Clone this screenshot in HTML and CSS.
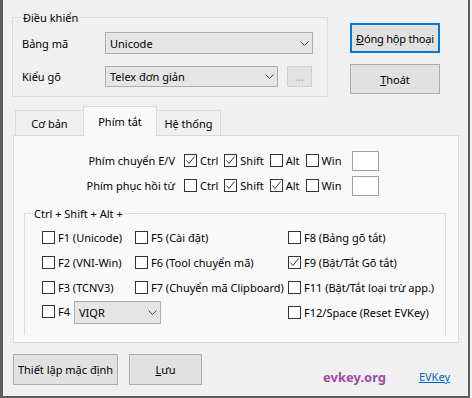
FILE: index.html
```html
<!DOCTYPE html>
<html lang="vi">
<head>
  <meta charset="UTF-8" />
  <title>EVKey | Phím tắt</title>
  <link rel="stylesheet" href="styles.css">
</head>
<body>
  <div class="window">
    <div class="top">
      <div class="group control">
        <span class="legend">Điều khiển</span>
        <div class="row">
          <span class="lbl">Bảng mã</span>
          <div class="combo combo-code">Unicode
            <svg class="chev" width="9" height="5" viewBox="0 0 9 5"><path d="M0.5 0.5 L4.5 4.5 L8.5 0.5" fill="none" stroke="#444"/></svg>
          </div>
        </div>
        <div class="row">
          <span class="lbl">Kiểu gõ</span>
          <div class="combo combo-type">Telex đơn giản
            <svg class="chev" width="9" height="5" viewBox="0 0 9 5"><path d="M0.5 0.5 L4.5 4.5 L8.5 0.5" fill="none" stroke="#444"/></svg>
          </div>
          <div class="dots">...</div>
        </div>
      </div>
      <div class="actions">
        <button class="btn btn-default"><u>Đ</u>óng hộp thoại</button>
        <button class="btn"><u>T</u>hoát</button>
      </div>
    </div>

    <div class="tabs">
      <div class="tab tab-first">Cơ bản</div>
      <div class="tab tab-active">Phím tắt</div>
      <div class="tab tab-last">Hệ thống</div>
    </div>

    <div class="panel">
      <div class="hk-row">
        <span class="hk-label">Phím chuyển E/V</span>
        <label class="check"><span class="box"><svg width="11" height="11" viewBox="0 0 11 11"><path d="M1.5 5.5 L4 8.5 L9.5 1.5" fill="none" stroke="#333"/></svg></span>Ctrl</label>
        <label class="check"><span class="box"><svg width="11" height="11" viewBox="0 0 11 11"><path d="M1.5 5.5 L4 8.5 L9.5 1.5" fill="none" stroke="#333"/></svg></span>Shift</label>
        <label class="check"><span class="box"></span>Alt</label>
        <label class="check"><span class="box"></span>Win</label>
        <span class="key"></span>
      </div>
      <div class="hk-row">
        <span class="hk-label">Phím phục hồi từ</span>
        <label class="check"><span class="box"></span>Ctrl</label>
        <label class="check"><span class="box"><svg width="11" height="11" viewBox="0 0 11 11"><path d="M1.5 5.5 L4 8.5 L9.5 1.5" fill="none" stroke="#333"/></svg></span>Shift</label>
        <label class="check"><span class="box"><svg width="11" height="11" viewBox="0 0 11 11"><path d="M1.5 5.5 L4 8.5 L9.5 1.5" fill="none" stroke="#333"/></svg></span>Alt</label>
        <label class="check"><span class="box"></span>Win</label>
        <span class="key"></span>
      </div>

      <div class="group hotkeys">
        <span class="legend">Ctrl + Shift + Alt +</span>
        <label class="check"><span class="box"></span>F1 (Unicode)</label>
        <label class="check"><span class="box"></span>F5 (Cài đặt)</label>
        <label class="check"><span class="box"></span>F8 (Bảng gõ tắt)</label>
        <label class="check"><span class="box"></span>F2 (VNI-Win)</label>
        <label class="check"><span class="box"></span>F6 (Tool chuyển mã)</label>
        <label class="check"><span class="box"><svg width="11" height="11" viewBox="0 0 11 11"><path d="M1.5 5.5 L4 8.5 L9.5 1.5" fill="none" stroke="#333"/></svg></span>F9 (Bật/Tắt Gõ tắt)</label>
        <label class="check"><span class="box"></span>F3 (TCNV3)</label>
        <label class="check"><span class="box"></span>F7 (Chuyển mã Clipboard)</label>
        <label class="check"><span class="box"></span>F11 (Bật/Tắt loại trừ app.)</label>
        <div class="f4">
          <label class="check"><span class="box"></span>F4</label>
          <div class="combo combo-f4">VIQR
            <svg class="chev" width="9" height="5" viewBox="0 0 9 5"><path d="M0.5 0.5 L4.5 4.5 L8.5 0.5" fill="none" stroke="#444"/></svg>
          </div>
        </div>
        <label class="check"><span class="box"></span>F12/Space (Reset EVKey)</label>
      </div>
    </div>

    <div class="footer">
      <button class="btn btn-reset">Thiết lập mặc định</button>
      <button class="btn btn-save"><u>L</u>ưu</button>
      <span class="brand">evkey.org</span>
      <a class="link" href="#">EVKey</a>
    </div>
  </div>
</body>
</html>
```

FILE: styles.css
```css
* {
  box-sizing: border-box;
}

body {
  margin: 0;
  width: 472px;
  height: 398px;
  overflow: hidden;
  background: #f0f0f0;
  font: 11px "Noto Sans", sans-serif;
  color: #000;
}

.window {
  width: 470px;
  height: 398px;
  border-left: 3px solid #5f5f5f;
  border-right: 2px solid #5f5f5f;
  border-bottom: 2px solid #5f5f5f;
  background: #f0f0f0;
}

/* group boxes */
.group {
  position: relative;
  border: 1px solid #dcdcdc;
}

.legend {
  position: absolute;
  top: -8px;
  left: 9px;
  padding: 0 1px;
  line-height: 15px;
  background: #f0f0f0;
}

.top {
  display: flex;
  padding-top: 17px;
}

.control {
  margin-left: 9px;
  width: 316px;
  height: 80px;
  padding: 14px 0 0 9px;
  display: flex;
  flex-direction: column;
  gap: 11px;
}

.row {
  display: flex;
  align-items: center;
  height: 22px;
}

.lbl {
  width: 83px;
}

.combo {
  display: flex;
  align-items: center;
  justify-content: space-between;
  height: 22px;
  padding: 0 3px 0 4px;
  border: 1px solid #adadad;
  background: #e5e5e5;
}

.combo-code {
  width: 208px;
}

.combo-type {
  width: 173px;
  height: 21px;
}

.dots {
  margin-left: 9px;
  width: 25px;
  height: 21px;
  border: 1px solid #cfcfcf;
  background: #e3e3e3;
  color: #9a9a9a;
  display: flex;
  align-items: center;
  justify-content: center;
}

.actions {
  margin: 6px 0 0 22px;
  display: flex;
  flex-direction: column;
  gap: 11px;
}

.btn {
  font: inherit;
  color: #000;
  background: #e1e1e1;
  border: 1px solid #adadad;
  padding: 0;
  width: 90px;
  height: 30px;
}

.btn-default {
  border: 2px solid #0078d7;
  letter-spacing: -0.2px;
}

/* tabs */
.tabs {
  position: relative;
  z-index: 1;
  display: flex;
  margin: 9px 0 0 12px;
  height: 29px;
}

.tab {
  margin-top: 4px;
  height: 25px;
  border: 1px solid #d9d9d9;
  border-bottom: none;
  background: #f0f0f0;
  display: flex;
  align-items: center;
  justify-content: center;
}

.tab-first {
  width: 68px;
  border-right: none;
}

.tab-active {
  margin-top: 0;
  width: 74px;
  height: 30px;
  padding-bottom: 1px;
  background: #f9f9f9;
}

.tab-last {
  width: 64px;
  border-left: none;
}

.panel {
  margin-left: 10px;
  width: 446px;
  height: 208px;
  border: 1px solid #d9d9d9;
  background: #f9f9f9;
  padding-top: 12px;
}

.panel .legend {
  background: #f9f9f9;
  left: 8px;
}

.hk-row {
  display: flex;
  align-items: center;
  height: 25px;
}

.hk-label {
  width: 161px;
  margin-right: 9px;
  text-align: right;
}

.check {
  display: flex;
  align-items: center;
  white-space: nowrap;
}

.hk-row .check {
  margin-right: 6px;
}

.box {
  flex: none;
  width: 13px;
  height: 13px;
  margin-right: 3px;
  border: 1px solid #333;
  background: #fff;
}

.box svg {
  display: block;
}

.key {
  margin-left: 5px;
  width: 27px;
  height: 20px;
  border: 1px solid #a0a0a0;
  background: #fff;
}

.hotkeys {
  margin: 15px 0 0 10px;
  width: 422px;
  height: 122px;
  border-bottom: none;
  padding: 11px 0 0 17px;
  display: grid;
  grid-template-columns: 93px 153px 1fr;
  grid-auto-rows: 25px;
}

.f4 {
  grid-column: span 2;
  display: flex;
  align-items: center;
}

.f4 .check {
  margin-top: -3px;
  margin-right: 4px;
}

.combo-f4 {
  width: 87px;
  height: 23px;
}

/* footer */
.footer {
  display: flex;
  align-items: center;
  margin: 11px 0 0 10px;
  height: 31px;
}

.btn-reset {
  width: 105px;
  height: 31px;
}

.btn-save {
  margin-left: 11px;
  width: 73px;
  height: 31px;
}

.brand {
  align-self: flex-end;
  margin: 0 0 -1px 121px;
  line-height: 18px;
  font-size: 13px;
  font-weight: bold;
  color: #a34aa6;
}

.link {
  align-self: flex-end;
  margin: 0 18px -1px auto;
  line-height: 18px;
  color: #0066cc;
}
```
